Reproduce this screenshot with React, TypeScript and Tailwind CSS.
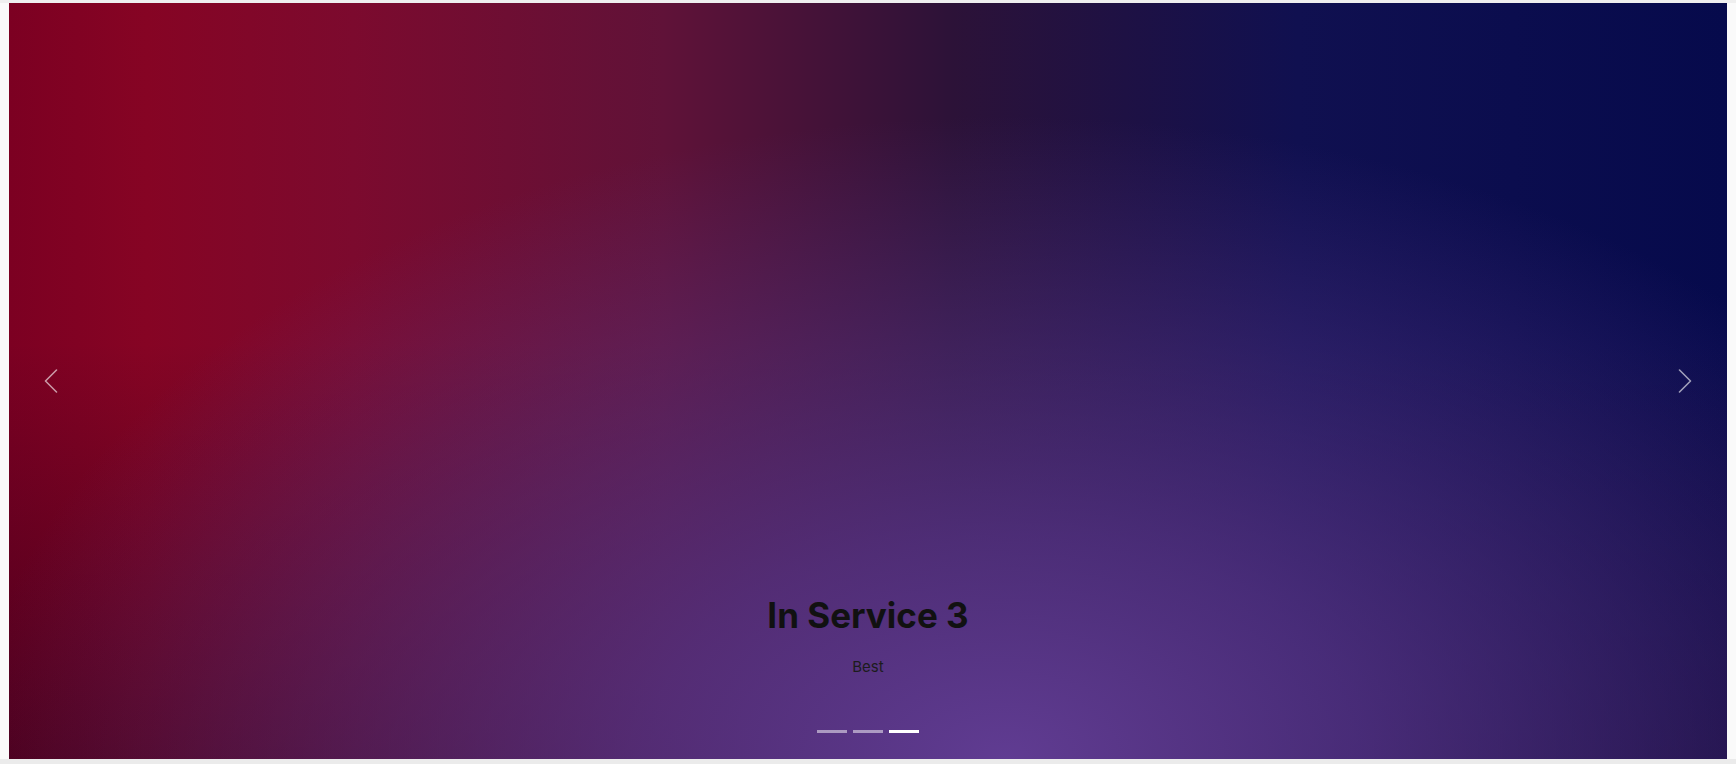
import { useState } from "react";

const slides = [
  { title: "In Service 1", text: "Fast" },
  { title: "In Service 2", text: "Reliable" },
  { title: "In Service 3", text: "Best" },
];

export default function App() {
  const [active, setActive] = useState(2);
  const slide = slides[active];

  const prev = () => setActive((active + slides.length - 1) % slides.length);
  const next = () => setActive((active + 1) % slides.length);

  return (
    <div className="min-h-screen bg-[#fafafa] flex flex-col" style={{ fontFamily: "Inter, 'Noto Sans', sans-serif" }}>
      <div className="h-[3px] bg-[#efefef]" />
      <div className="px-[9px]">
        {/* Carousel */}
        <section
          className="relative h-[756px] overflow-hidden bg-[radial-gradient(ellipse_60%_85%_at_58%_100%,rgba(96,60,146,1)_0%,rgba(90,55,140,0.75)_35%,rgba(80,45,130,0)_100%),linear-gradient(to_bottom,rgba(20,0,25,0)_45%,rgba(20,0,25,0.45)_100%),linear-gradient(to_right,#7c0022_0%,#860424_8%,#7c0a2e_20%,#601238_38%,#2c1238_55%,#101050_75%,#060a4c_100%)]"
          aria-label="Services carousel"
        >
          <button
            onClick={prev}
            className="absolute left-0 top-0 bottom-0 w-[84px] flex items-center justify-center text-white/60 hover:text-white"
            aria-label="Previous"
          >
            <ChevronLeft />
          </button>
          <button
            onClick={next}
            className="absolute right-0 top-0 bottom-0 w-[84px] flex items-center justify-center text-white/60 hover:text-white"
            aria-label="Next"
          >
            <ChevronRight />
          </button>

          {/* Caption */}
          <div className="absolute inset-x-0 bottom-0 flex flex-col items-center pb-[26px]">
            <h2 className="text-[35px] leading-[40px] font-bold text-[#111111]">{slide.title}</h2>
            <p className="mt-[22px] text-[15px] leading-[20px] text-[#1c1c1c]">{slide.text}</p>
            <div className="mt-[53px] flex gap-[6px]">
              {slides.map((s, i) => (
                <button
                  key={s.title}
                  onClick={() => setActive(i)}
                  className={i === active ? "w-[30px] h-[3px] bg-white" : "w-[30px] h-[3px] bg-white/50"}
                  aria-label={`Slide ${i + 1}`}
                />
              ))}
            </div>
          </div>
        </section>
      </div>
      <div className="h-[5px] bg-[#ebebeb]" />
    </div>
  );
}

function ChevronLeft() {
  return (
    <svg width="14" height="24" viewBox="0 0 14 24" fill="none" stroke="currentColor" strokeWidth="1.6" strokeLinecap="round" strokeLinejoin="round" aria-hidden="true">
      <polyline points="12.5,1 1.5,12 12.5,23" />
    </svg>
  );
}

function ChevronRight() {
  return (
    <svg width="14" height="24" viewBox="0 0 14 24" fill="none" stroke="currentColor" strokeWidth="1.6" strokeLinecap="round" strokeLinejoin="round" aria-hidden="true">
      <polyline points="1.5,1 12.5,12 1.5,23" />
    </svg>
  );
}
